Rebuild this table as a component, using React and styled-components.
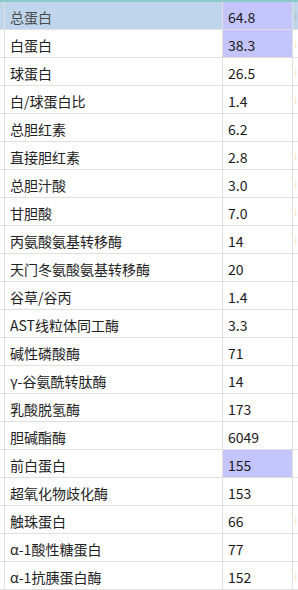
import React from 'react'
import styled, { createGlobalStyle } from 'styled-components'

const rows = [
    { name: '总蛋白', value: '64.8', selected: true, flag: true, mark: '|' },
    { name: '白蛋白', value: '38.3', flag: true, mark: '|' },
    { name: '球蛋白', value: '26.5', mark: '|' },
    { name: '白/球蛋白比', value: '1.4', mark: '|' },
    { name: '总胆红素', value: '6.2' },
    { name: '直接胆红素', value: '2.8', mark: '|' },
    { name: '总胆汁酸', value: '3.0', mark: '|' },
    { name: '甘胆酸', value: '7.0', mark: '|' },
    { name: '丙氨酸氨基转移酶', value: '14', mark: '|' },
    { name: '天门冬氨酸氨基转移酶', value: '20' },
    { name: '谷草/谷丙', value: '1.4' },
    { name: 'AST线粒体同工酶', value: '3.3' },
    { name: '碱性磷酸酶', value: '71' },
    { name: 'γ-谷氨酰转肽酶', value: '14' },
    { name: '乳酸脱氢酶', value: '173' },
    { name: '胆碱酯酶', value: '6049' },
    { name: '前白蛋白', value: '155', flag: true },
    { name: '超氧化物歧化酶', value: '153' },
    { name: '触珠蛋白', value: '66', mark: '|' },
    { name: 'α-1酸性糖蛋白', value: '77' },
    { name: 'α-1抗胰蛋白酶', value: '152', mark: '|' },
]

function App() {
    return (
        <>
            <GlobalStyle />
            <Sheet>
                {rows.map((r) => (
                    <Row key={r.name}>
                        <EdgeCell selected={r.selected} />
                        <NameCell selected={r.selected}>{r.name}</NameCell>
                        <ValueCell flag={r.flag}>{r.value}</ValueCell>
                        <MarkCell selected={r.selected}>{r.mark}</MarkCell>
                    </Row>
                ))}
            </Sheet>
        </>
    )
}

export default App

const GlobalStyle = createGlobalStyle`
    body {
        margin : 0;
        overflow : hidden;
        background : #ffffff;
        font-family : "Microsoft YaHei", "Noto Sans CJK SC", sans-serif;
    }
`

const Sheet = styled.div`
    width : 298px;
    height : 590px;
    overflow : hidden;
    border-top : 2px solid #8ccaca;
    box-sizing : border-box;
`

const Row = styled.div`
    display : grid;
    grid-template-columns : 5px 218px 70px 1fr;
    height : 28px;
`

const Cell = styled.div`
    box-sizing : border-box;
    border-right : 1px solid #e0e0e0;
    border-bottom : 1px solid #e0e0e0;
    display : flex;
    align-items : center;
    padding : 3px 0 0 5px;
    font-size : 14px;
    line-height : 20px;
    white-space : nowrap;
    overflow : hidden;
    color : #222222;
`

const EdgeCell = styled(Cell)`
    padding : 0;
    background : ${props => props.selected ? '#bed5eb' : '#ffffff'};
`

const NameCell = styled(Cell)`
    background : ${props => props.selected ? '#bed5eb' : '#ffffff'};
    color : ${props => props.selected ? '#4a4a4a' : '#222222'};
`

const ValueCell = styled(Cell)`
    background : ${props => props.flag ? '#c4c4fe' : '#ffffff'};
    color : #1a1a1a;
`

const MarkCell = styled(Cell)`
    border-right : none;
    padding-left : 2px;
    font-size : 6px;
    line-height : 8px;
    color : ${props => props.selected ? '#9a8a70' : '#f0b060'};
    background : ${props => props.selected ? '#bed5eb' : '#ffffff'};
`
